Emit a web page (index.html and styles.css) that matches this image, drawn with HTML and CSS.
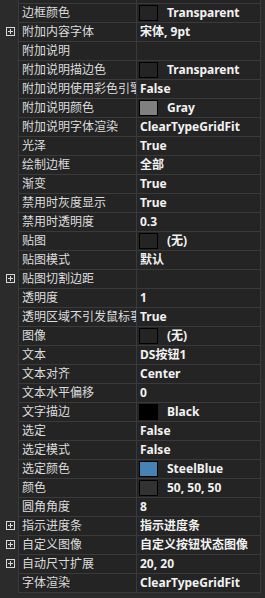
FILE: index.html
```html
<!doctype html>
<html>
<head>
    <title>属性</title>
    <link rel="stylesheet" href="styles.css">
</head>
<body>
<div class="sheet">
    <div class="row top"><div class="gut"></div><div class="name"></div><div class="value"></div></div>

    <div class="row"><div class="gut"></div><div class="name">边框颜色</div><div class="value"><span class="swatch"></span>Transparent</div></div>
    <div class="row"><div class="gut"><span class="plus"></span></div><div class="name">附加内容字体</div><div class="value">宋体, 9pt</div></div>
    <div class="row"><div class="gut"></div><div class="name">附加说明</div><div class="value"></div></div>
    <div class="row"><div class="gut"></div><div class="name">附加说明描边色</div><div class="value"><span class="swatch"></span>Transparent</div></div>
    <div class="row"><div class="gut"></div><div class="name">附加说明使用彩色引擎</div><div class="value">False</div></div>
    <div class="row"><div class="gut"></div><div class="name">附加说明颜色</div><div class="value"><span class="swatch gray"></span>Gray</div></div>
    <div class="row"><div class="gut"></div><div class="name">附加说明字体渲染</div><div class="value">ClearTypeGridFit</div></div>
    <div class="row"><div class="gut"></div><div class="name">光泽</div><div class="value">True</div></div>
    <div class="row"><div class="gut"></div><div class="name">绘制边框</div><div class="value">全部</div></div>
    <div class="row"><div class="gut"></div><div class="name">渐变</div><div class="value">True</div></div>
    <div class="row"><div class="gut"></div><div class="name">禁用时灰度显示</div><div class="value">True</div></div>
    <div class="row"><div class="gut"></div><div class="name">禁用时透明度</div><div class="value">0.3</div></div>
    <div class="row"><div class="gut"></div><div class="name">贴图</div><div class="value"><span class="swatch"></span>(无)</div></div>
    <div class="row"><div class="gut"></div><div class="name">贴图模式</div><div class="value">默认</div></div>
    <div class="row"><div class="gut"><span class="plus"></span></div><div class="name">贴图切割边距</div><div class="value"></div></div>
    <div class="row"><div class="gut"></div><div class="name">透明度</div><div class="value">1</div></div>
    <div class="row"><div class="gut"></div><div class="name">透明区域不引发鼠标事件</div><div class="value">True</div></div>
    <div class="row"><div class="gut"></div><div class="name">图像</div><div class="value"><span class="swatch"></span>(无)</div></div>
    <div class="row"><div class="gut"></div><div class="name">文本</div><div class="value">DS按钮1</div></div>
    <div class="row"><div class="gut"></div><div class="name">文本对齐</div><div class="value">Center</div></div>
    <div class="row"><div class="gut"></div><div class="name">文本水平偏移</div><div class="value">0</div></div>
    <div class="row"><div class="gut"></div><div class="name">文字描边</div><div class="value"><span class="swatch black"></span>Black</div></div>
    <div class="row"><div class="gut"></div><div class="name">选定</div><div class="value">False</div></div>
    <div class="row"><div class="gut"></div><div class="name">选定模式</div><div class="value">False</div></div>
    <div class="row"><div class="gut"></div><div class="name">选定颜色</div><div class="value"><span class="swatch steel"></span>SteelBlue</div></div>
    <div class="row"><div class="gut"></div><div class="name">颜色</div><div class="value"><span class="swatch dark"></span>50, 50, 50</div></div>
    <div class="row"><div class="gut"></div><div class="name">圆角角度</div><div class="value">8</div></div>
    <div class="row"><div class="gut"><span class="plus"></span></div><div class="name">指示进度条</div><div class="value">指示进度条</div></div>
    <div class="row"><div class="gut"><span class="plus"></span></div><div class="name">自定义图像</div><div class="value">自定义按钮状态图像</div></div>
    <div class="row"><div class="gut"><span class="plus"></span></div><div class="name">自动尺寸扩展</div><div class="value">20, 20</div></div>
    <div class="row last"><div class="gut"></div><div class="name">字体渲染</div><div class="value">ClearTypeGridFit</div></div>
</div>
</body>
</html>
```

FILE: styles.css
```css
body {
    margin: 0;
    padding: 0;
    background-color: #2b2b2b;
    font-family: "Noto Sans", "Noto Sans CJK SC", sans-serif;
    font-size: 12px;
}
.sheet {
    width: 261px;
}
.row {
    display: flex;
    height: 19px;
}
.row.top {
    height: 3px;
}
.row.last {
    height: 20px;
}
.gut {
    width: 18px;
    flex: none;
    display: flex;
    align-items: center;
    justify-content: center;
    padding-left: 3px;
    box-sizing: border-box;
}
.name, .value {
    background-color: #242424;
    border-left: 1px solid #3a3a3a;
    border-top: 1px solid #3a3a3a;
    line-height: 18px;
    white-space: nowrap;
    overflow: hidden;
    box-sizing: border-box;
}
.top .name, .top .value {
    border-top: none;
}
.last .name, .last .value {
    border-bottom: 1px solid #3a3a3a;
}
.name {
    width: 118px;
    padding-left: 3px;
    color: #dcdcdc;
}
.value {
    width: 125px;
    border-right: 1px solid #3a3a3a;
    padding-left: 3px;
    color: #f2f2f2;
    font-weight: bold;
    display: flex;
    align-items: center;
}
.swatch {
    width: 19px;
    height: 16px;
    margin-left: -1px;
    margin-right: 9px;
    border: 1px solid #000000;
    box-sizing: border-box;
    background-color: #242424;
    flex: none;
}
.swatch.gray { background-color: #808080; }
.swatch.black { background-color: #000000; }
.swatch.steel { background-color: #4682b4; }
.swatch.dark { background-color: #323232; }
/* expand box */
.plus {
    position: relative;
    width: 9px;
    height: 9px;
    border: 1px solid #d8d8d8;
    box-sizing: border-box;
}
.plus::before, .plus::after {
    content: "";
    position: absolute;
    background-color: #d8d8d8;
}
.plus::before {
    left: 1px;
    top: 3px;
    width: 5px;
    height: 1px;
}
.plus::after {
    left: 3px;
    top: 1px;
    width: 1px;
    height: 5px;
}
```
